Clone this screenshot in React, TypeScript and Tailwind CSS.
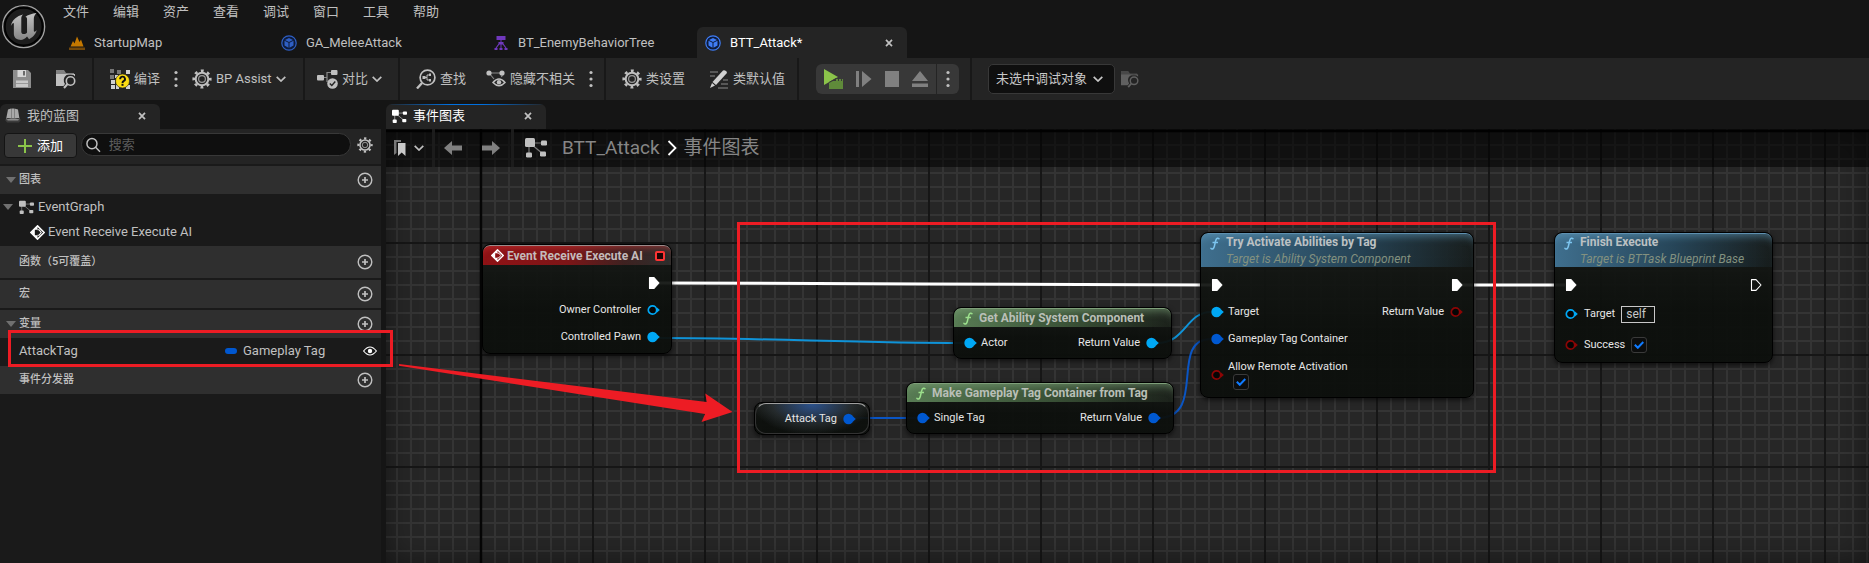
import React from "react";

type P = { className?: string };

/* ---------- icons ---------- */

const Logo = () => (
  <svg viewBox="6 18 130 130" className="size-11 shrink-0" aria-hidden="true">
    <defs>
      <linearGradient id="steel" x1="0" y1="0" x2="0" y2="1">
        <stop offset="0" stopColor="#c4c4c4" />
        <stop offset="1" stopColor="#858585" />
      </linearGradient>
    </defs>
    <circle cx="70" cy="82" r="62" fill="#0b0b0b" stroke="#a3a3a3" strokeWidth="4" />
    <circle cx="70" cy="82" r="55" fill="#1d1d1d" stroke="#000" strokeWidth="4" />
    <path
      d="M32 80C36 62 50 50 68 46C64 50 63 54 63 58V97C63 102 66 104 70 104C74 104 78 102 80 99V60C80 55 78 53 74 54C82 47 95 44 108 42C102 48 100 54 100 60V93C100 99 104 98 109 92C104 107 95 115 86 119L80 111C74 119 66 122 58 121C46 119 41 112 41 102V74C41 69 37 71 32 80Z"
      fill="url(#steel)"
    />
  </svg>
);

const LevelIcon = () => (
  <svg viewBox="0 0 16 16" className="size-4 shrink-0" aria-hidden="true">
    <path d="M1.500 11.500L4 6L5.500 8.500L8 1.500L10.500 7L12 4.500L14.500 11.500Z" fill="#c47800" />
    <path d="M0 12.500H16V15H0Z" fill="#74490a" />
  </svg>
);

const BlueprintIcon = ({ className = "text-[#2f5fc4]" }: P) => (
  <svg viewBox="0 0 16 16" className={"size-4 shrink-0 " + className} aria-hidden="true">
    <circle cx="8" cy="8" r="7.200" fill="#0d1b3b" stroke="currentColor" strokeWidth="1.200" />
    <path d="M8 3L12 4.900L8 6.900L4 4.900Z M3.500 5.800L7.500 7.800V12.800L3.500 10.500Z M12.500 5.800L8.500 7.800V12.800L12.500 10.500Z" fill="currentColor" />
  </svg>
);

const TreeIcon = () => (
  <svg viewBox="0 0 16 16" className="size-4 shrink-0" fill="#7038bd" aria-hidden="true">
    <path d="M3.500 1H12.500V5H3.500ZM5.500 7H10.500V9.500H5.500ZM7.500 5H8.500V13H7.500ZM1.500 13H4.500V15H1.500ZM6.500 13H9.500V15H6.500ZM11.500 13H14.500V15H11.500Z" />
    <path d="M6 9L3 13M10 9L13 13" stroke="#7038bd" strokeWidth="1.200" />
  </svg>
);

const SaveIcon = () => (
  <svg viewBox="0 0 20 20" className="size-5" aria-hidden="true">
    <path d="M1 1H16L19 4V19H1Z" fill="#8d8d8d" />
    <path d="M5.500 1H14V8H5.500Z" fill="#d6d6d6" />
    <path d="M11 2H13V6.500H11Z" fill="#6a6a6a" />
    <path d="M4 11.500H16V18H4Z" fill="#c8c8c8" />
    <path d="M4 14H16V15H4Z" fill="#999" />
  </svg>
);

const BrowseIcon = ({ className = "size-5" }: P) => (
  <svg viewBox="0 0 20 20" className={className} aria-hidden="true">
    <path d="M0 1H8L10 4H18V6H0Z" fill="currentColor" opacity=".6" />
    <path d="M0 5H19V7.500A6 6 0 0 0 9 15L7.500 17H0Z" fill="currentColor" />
    <circle cx="14.500" cy="12" r="4.200" fill="none" stroke="currentColor" strokeWidth="1.600" />
    <path d="M11.500 15L8 19" stroke="currentColor" strokeWidth="2" />
  </svg>
);

const CompileIcon = () => (
  <svg viewBox="0 0 20 20" className="size-5" aria-hidden="true">
    <g fill="#777">
      <path d="M0 0H4V4H0ZM7 1H11V5H7Z" />
      <path d="M0 6H4V10H0Z" />
    </g>
    <g fill="#d0d0d0">
      <path d="M16 1H20V5H16ZM1 11H5V15H1ZM1 16H5V20H1ZM6 16H9V20H6ZM5 6H8V9H5ZM16 16H20V20H16Z" />
    </g>
    <circle cx="12.500" cy="12" r="7" fill="#fcdc12" stroke="#242424" strokeWidth=".6" />
    <path d="M10.200 10.200A2.400 2.400 0 1 1 13.600 12.200Q12.500 12.800 12.500 14" fill="none" stroke="#111" strokeWidth="1.900" />
    <path d="M11.500 14.800H13.500V16.800H11.500Z" fill="#111" />
  </svg>
);

const Gear = ({ className = "size-5" }: P) => (
  <svg viewBox="0 0 20 20" className={className} fill="none" stroke="currentColor" aria-hidden="true">
    <circle cx="10" cy="10" r="8.300" strokeWidth="2.600" strokeDasharray="2.900 3.619" strokeDashoffset="1.450" />
    <circle cx="10" cy="10" r="6.300" strokeWidth="2" />
    <circle cx="10" cy="10" r="3.400" strokeWidth="1.200" opacity=".75" />
  </svg>
);

const DiffIcon = () => (
  <svg viewBox="0 0 21 20" className="h-5 w-[21px]" aria-hidden="true">
    <path d="M6 8.500H10V3.500H15M10 8.500V13" fill="none" stroke="#8a8a8a" strokeWidth="1.200" />
    <rect x="0" y="6" width="7" height="5.500" rx="1" fill="#c0c0c0" />
    <rect x="14" y="1" width="6.500" height="5" rx="1" fill="#c0c0c0" />
    <circle cx="15.500" cy="14.500" r="5.300" fill="#c0c0c0" />
    <path d="M12.800 14.500L14.800 16.500L18.300 12.500" fill="none" stroke="#242424" strokeWidth="1.400" />
  </svg>
);

const FindIcon = () => (
  <svg viewBox="0 0 20 20" className="size-5" fill="none" stroke="#c0c0c0" aria-hidden="true">
    <circle cx="11.500" cy="8.500" r="7.400" strokeWidth="1.700" />
    <path d="M6 14L1 19.500" strokeWidth="2.400" />
    <path d="M8 8.500H11V6H14M11 8.500V11H14" strokeWidth="1" />
    <path d="M6.500 7H9.500V10H6.500ZM13 4.500H15V7H13ZM13 10H15V12.500H13Z" fill="#c0c0c0" stroke="none" />
  </svg>
);

const HideIcon = () => (
  <svg viewBox="0 0 20 20" className="size-5" aria-hidden="true">
    <path d="M3 4L8 10M3 4H17M17 4L15.500 8" fill="none" stroke="#8a8a8a" strokeWidth="1.100" />
    <circle cx="3" cy="4" r="2.600" fill="#c0c0c0" />
    <circle cx="16" cy="4" r="2.600" fill="#c0c0c0" />
    <path d="M7 13.500Q13 6.500 19 13.500Q13 20 7 13.500Z" fill="#242424" stroke="#c0c0c0" strokeWidth="1.500" />
    <circle cx="13" cy="13.300" r="2.200" fill="#c0c0c0" />
  </svg>
);

const PencilIcon = () => (
  <svg viewBox="0 0 20 20" className="size-5" aria-hidden="true">
    <path d="M1 3H9M1 7H6M14 11H19M12 15H19M9 19H19" stroke="#8a8a8a" strokeWidth="1.200" />
    <path d="M14 1.500Q16 .5 18 3L17.500 4.500L7 16L3.500 13Z" fill="#d0d0d0" />
    <path d="M3 14L6 16.500L1 19Z" fill="#d0d0d0" />
  </svg>
);

const Chevron = ({ className = "w-[10px] h-[6px]" }: P) => (
  <svg viewBox="0 0 10 6" className={className} fill="none" stroke="currentColor" strokeWidth="1.700" aria-hidden="true">
    <path d="M.7 .8L5 5L9.300 .8" />
  </svg>
);

const Dots = () => (
  <svg viewBox="0 0 4 18" className="h-[18px] w-1" fill="currentColor" aria-hidden="true">
    <circle cx="2" cy="2.500" r="1.600" />
    <circle cx="2" cy="9" r="1.600" />
    <circle cx="2" cy="15.500" r="1.600" />
  </svg>
);

const CloseIcon = () => (
  <svg viewBox="0 0 8 8" className="size-2" stroke="currentColor" strokeWidth="1.700" aria-hidden="true">
    <path d="M1 .8L7 7.200M7 .8L1 7.200" />
  </svg>
);

const GraphIcon = ({ className = "size-[15px]" }: P) => (
  <svg viewBox="0 0 22 20" className={"shrink-0 " + className} aria-hidden="true">
    <path d="M4 5H18M4 5V17M6 6L18 16" stroke="currentColor" opacity=".6" strokeWidth="1.200" />
    <rect x="0" y="0" width="10" height="9" rx="1.500" fill="currentColor" />
    <rect x="16" y="2.500" width="6" height="5" rx="1.200" fill="currentColor" />
    <rect x="1" y="14.500" width="6" height="5" rx="1.200" fill="currentColor" />
    <rect x="15" y="13.500" width="6" height="5" rx="1.200" fill="currentColor" />
  </svg>
);

const BookIcon = () => (
  <svg viewBox="0 0 16 16" className="size-4 shrink-0" aria-hidden="true">
    <path d="M3 1.500L6 .5V11L1 11.500ZM6.300 .5H9V11H6.300ZM9.300 .5L13 1.500L14.500 11L9.300 11Z" fill="#a8a8a8" />
    <path d="M0 12L2 10L14 10L16 12L14 14.500L2 14.500Z" fill="#3c3c3c" />
    <path d="M1 11.500L6 10.500H10L14.500 11.500L13 12.500H3Z" fill="#8c8c8c" />
  </svg>
);

const EventIcon = ({ className = "size-[15px]" }: P) => (
  <svg viewBox="0 0 14 14" className={"shrink-0 " + className} aria-hidden="true">
    <path d="M7 .8L13.200 7L7 13.200L.8 7Z" fill="none" stroke="#fff" strokeWidth="1.400" />
    <path d="M7 1V4.500H4.500V9.500H7V13L1 7Z" fill="#fff" />
    <path d="M7 4.500H8.500L10.500 7L8.500 9.500H7" fill="none" stroke="#fff" strokeWidth="1" />
  </svg>
);

const PlusCircle = () => (
  <svg viewBox="0 0 16 16" className="size-4" fill="none" stroke="#c0c0c0" aria-hidden="true">
    <circle cx="8" cy="8" r="6.800" strokeWidth="1.400" />
    <path d="M8 5V11M5 8H11" strokeWidth="1.700" />
  </svg>
);

const Triangle = () => (
  <svg viewBox="0 0 10 6" className="h-[6px] w-[10px] shrink-0" aria-hidden="true">
    <path d="M0 0H10L5 6Z" fill="#707070" />
  </svg>
);

const ArrowIcon = ({ className = "" }: P) => (
  <svg viewBox="0 0 18 14" className={"h-[14px] w-[18px] " + className} aria-hidden="true">
    <path d="M0 7L8 0V4.500H18V9.500H8V14Z" fill="#808080" />
  </svg>
);

const FuncIcon = ({ className = "" }: P) => (
  <svg viewBox="0 0 10 13" className={"h-[13px] w-[10px] shrink-0 " + className} fill="none" stroke="currentColor" aria-hidden="true">
    <path d="M9.300 2.200Q8.800 .8 7.300 1.300Q6.200 1.700 5.600 4L4.300 9.500Q3.600 12.300 1.800 12Q.8 11.800 .8 10.800" strokeWidth="1.500" />
    <path d="M2.500 5.500H8" strokeWidth="1.300" />
  </svg>
);

const ExecPin = ({ open = false }: { open?: boolean }) => (
  <svg viewBox="0 0 12 12" className="size-3 shrink-0" aria-hidden="true">
    <path d="M1.500 .6H6L11 6L6 11.400H1.500Z" fill={open ? "none" : "#fff"} stroke="#fff" strokeWidth="1.100" strokeLinejoin="round" />
  </svg>
);

const Pin = ({ className = "text-[#00a8f5]", open = false }: P & { open?: boolean }) => (
  <svg viewBox="0 0 13 12" className={"h-3 w-[13px] shrink-0 " + className} aria-hidden="true">
    <circle cx="5.500" cy="6" r={open ? 4.200 : 5.200} fill={open ? "#050505" : "currentColor"} stroke="currentColor" strokeWidth={open ? 1.700 : 0} />
    <path d="M10 3.500L12.800 6L10 8.500Z" fill="currentColor" />
  </svg>
);

/* ---------- chrome ---------- */

const MENU = ["文件", "编辑", "资产", "查看", "调试", "窗口", "工具", "帮助"];

function TopBar() {
  return (
    <header className="flex h-[58px] bg-[#151515] pl-[2px]">
      <div className="flex w-[59px] items-start pt-[5px]">
        <Logo />
      </div>
      <div className="flex flex-1 flex-col justify-between">
        <nav className="flex h-6 items-center gap-6 pl-[2px]">
          {MENU.map((m) => (
            <button key={m} className="leading-6 whitespace-nowrap">{m}</button>
          ))}
        </nav>
        <div role="tablist" className="flex h-[31px] gap-[2px]">
          <DocTab icon={<LevelIcon />} label="StartupMap" />
          <DocTab icon={<BlueprintIcon />} label="GA_MeleeAttack" />
          <DocTab icon={<TreeIcon />} label="BT_EnemyBehaviorTree" />
          <DocTab icon={<BlueprintIcon className="text-[#3f7df6]" />} label="BTT_Attack*" active />
        </div>
      </div>
    </header>
  );
}

function DocTab({ icon, label, active }: { icon: React.ReactNode; label: string; active?: boolean }) {
  return (
    <div className={"flex w-[210px] items-center rounded-t-md pr-[14px] pl-2 " + (active ? "bg-[#242424] text-white" : "")}>
      <button role="tab" aria-selected={!!active} className="flex flex-1 items-center gap-[9px]">
        {icon}
        {label}
      </button>
      {active && (
        <button aria-label="关闭" className="text-[#c0c0c0]"><CloseIcon /></button>
      )}
    </div>
  );
}

const Sep = () => <div className="w-[2px] shrink-0 self-stretch bg-[#181818]" />;

const Tool = ({ icon, label, drop }: { icon: React.ReactNode; label: string; drop?: boolean }) => (
  <button className="flex items-center gap-1 whitespace-nowrap">
    {icon}
    {label}
    {drop && <Chevron />}
  </button>
);

function Toolbar() {
  return (
    <div className="flex h-[42px] items-center bg-[#242424]">
      <div className="flex w-[92px] items-center gap-6 pl-3">
        <button aria-label="保存"><SaveIcon /></button>
        <button aria-label="浏览"><BrowseIcon /></button>
      </div>
      <Sep />
      <div className="flex w-[209px] items-center gap-[14px] pl-4">
        <Tool icon={<CompileIcon />} label="编译" />
        <button aria-label="编译选项"><Dots /></button>
        <Tool icon={<Gear />} label="BP Assist" drop />
      </div>
      <Sep />
      <div className="flex w-[93px] items-center pl-3">
        <Tool icon={<DiffIcon />} label="对比" drop />
      </div>
      <Sep />
      <div className="flex w-[204px] items-center gap-5 pl-4">
        <Tool icon={<FindIcon />} label="查找" />
        <div className="flex items-center gap-[14px]">
          <Tool icon={<HideIcon />} label="隐藏不相关" />
          <button aria-label="隐藏选项"><Dots /></button>
        </div>
      </div>
      <Sep />
      <div className="flex w-[191px] items-center gap-6 pl-4">
        <Tool icon={<Gear />} label="类设置" />
        <Tool icon={<PencilIcon />} label="类默认值" />
      </div>
      <Sep />
      <div className="flex w-[171px] items-center pl-[17px]">
        <div className="flex h-[30px] items-center rounded-md bg-[#383838] text-[#808080]">
          <div className="flex items-center gap-3 px-2">
            <button aria-label="播放">
              <svg viewBox="0 0 20 20" className="size-5" aria-hidden="true">
                <path d="M0 0L14 8L0 16Z" fill="#8bc34a" />
                <path d="M5 13L12 9H19V20H5Z" fill="#383838" />
                <path d="M5 14L9 12H19V20H5Z" fill="#5f8a3a" />
                <path d="M12 11H19" stroke="#5f8a3a" strokeDasharray="2 1" strokeWidth="2" />
              </svg>
            </button>
            <button aria-label="单步">
              <svg viewBox="0 0 16 16" className="size-4" fill="currentColor" aria-hidden="true">
                <path d="M0 0H3V16H0ZM6 0L15.500 8L6 16Z" />
              </svg>
            </button>
            <button aria-label="停止">
              <svg viewBox="0 0 16 16" className="size-4" fill="currentColor" aria-hidden="true">
                <path d="M1 0H15V16H1Z" />
              </svg>
            </button>
            <button aria-label="弹出">
              <svg viewBox="0 0 16 16" className="size-4" fill="currentColor" aria-hidden="true">
                <path d="M8 0L16 10H0ZM0 12.500H16V16H0Z" />
              </svg>
            </button>
          </div>
          <div className="h-full w-px bg-[#242424]" />
          <button aria-label="播放选项" className="px-[9px] text-[#c0c0c0]"><Dots /></button>
        </div>
      </div>
      <Sep />
      <div className="flex items-center gap-[6px] pl-4">
        <div className="relative text-[#c8c8c8]">
          <select aria-label="调试对象" className="h-[30px] w-[127px] appearance-none rounded-[5px] border border-[#383838] bg-[#0f0f0f] pl-[7px]">
            <option>未选中调试对象</option>
          </select>
          <Chevron className="pointer-events-none absolute top-3 right-3 h-[6px] w-[10px]" />
        </div>
        <button aria-label="浏览调试对象" className="text-[#606060]"><BrowseIcon className="size-[18px]" /></button>
      </div>
    </div>
  );
}

/* ---------- left panel ---------- */

function Section({ label, open, className = "h-7" }: { label: string; open?: boolean } & P) {
  return (
    <div className={"flex items-center bg-[#2f2f2f] pr-2 pl-[6px] " + className}>
      <div className="flex w-[13px]">{open && <Triangle />}</div>
      <span className="flex-1 text-[11px] leading-4 font-medium">{label}</span>
      <button aria-label={"添加" + label}><PlusCircle /></button>
    </div>
  );
}

function MyBlueprint() {
  return (
    <aside className="flex w-[381px] shrink-0 flex-col">
      <div className="flex h-[29px] items-end">
        <div className="flex h-[25px] w-40 items-center rounded-t-md bg-[#242424] pr-[14px] pb-[2px] pl-[5px]">
          <div className="flex flex-1 items-center gap-[6px]">
            <BookIcon />
            我的蓝图
          </div>
          <button aria-label="关闭"><CloseIcon /></button>
        </div>
      </div>
      <div className="flex flex-1 flex-col bg-[#1a1a1a]">
        <div className="mb-[2px] flex h-[35px] items-start gap-1 bg-[#242424] pt-1 pr-2 pl-1">
          <button className="flex h-[25px] w-[73px] items-center justify-center gap-[5px] rounded border border-[#141414] bg-[#383838] text-white">
            <svg viewBox="0 0 14 14" className="size-[14px]" stroke="#8bc34a" strokeWidth="2" aria-hidden="true">
              <path d="M7 0V14M0 7H14" />
            </svg>
            添加
          </button>
          <label className="flex h-[23px] flex-1 items-center gap-2 rounded-full border border-[#383838] bg-[#0f0f0f] pl-1">
            <svg viewBox="0 0 16 16" className="size-4" fill="none" stroke="#c0c0c0" strokeWidth="1.600" aria-hidden="true">
              <circle cx="6.500" cy="6.500" r="5.500" />
              <path d="M10.500 10.500L15.300 15.300" />
            </svg>
            <input aria-label="搜索" placeholder="搜索" className="w-full bg-transparent outline-none placeholder:text-[#5c5c5c]" />
          </label>
          <button aria-label="设置" className="flex h-6 items-center pl-[2px]"><Gear className="size-4" /></button>
        </div>
        <Section label="图表" open />
        <div className="flex h-[26px] items-center pl-[3px]">
          <div className="flex w-4"><Triangle /></div>
          <GraphIcon className="mr-1 size-[15px]" />
          EventGraph
        </div>
        <div className="flex h-[26px] items-center gap-[3px] pb-[2px] pl-[30px]">
          <EventIcon />
          Event Receive Execute AI
        </div>
        <Section label="函数（5可覆盖）" className="mb-[2px] h-8" />
        <Section label="宏" className="mb-[2px] h-7" />
        <Section label="变量" open />
        <div className="flex h-7 items-center pr-1 pb-[2px] pl-[19px]">
          <span className="w-[206px]">AttackTag</span>
          <span className="mr-[6px] h-[6px] w-3 rounded-full bg-[#0057d0]" />
          <span className="flex-1">Gameplay Tag</span>
          <button aria-label="切换可见性">
            <svg viewBox="0 0 14 10" className="h-[10px] w-[14px]" fill="none" stroke="#fff" strokeWidth="1.200" aria-hidden="true">
              <path d="M.6 5Q7-3 13.400 5Q7 13 .6 5Z" />
              <circle cx="7" cy="5" r="2.200" fill="#fff" stroke="none" />
            </svg>
          </button>
        </div>
        <Section label="事件分发器" />
      </div>
    </aside>
  );
}

/* ---------- graph ---------- */

const Row = ({ left, right, className = "h-[27px]" }: { left?: React.ReactNode; right?: React.ReactNode } & P) => (
  <div className={"flex items-center justify-between " + className}>
    <div className="flex items-center gap-1">{left}</div>
    <div className="flex items-center gap-[6px]">{right}</div>
  </div>
);

const NODE =
  "absolute overflow-hidden rounded-lg border border-black bg-[linear-gradient(180deg,rgba(22,25,22,.93),rgba(12,15,12,.95)_60%)] text-[11px] leading-[14px] text-[#e6e6e6] shadow-[0_2px_5px_rgba(0,0,0,.6)] ";

function CallNode({ title, sub, className, children }: { title: string; sub: string; className: string; children: React.ReactNode }) {
  return (
    <section className={NODE + className}>
      <div className="flex h-[34px] gap-[6px] rounded-t-[7px] border-t border-[#5e90b0] bg-[linear-gradient(90deg,#3f6f8e_0%,rgba(44,84,110,.75)_55%,rgba(40,60,72,.15)_100%)] pl-[9px] shadow-[inset_0_8px_8px_-6px_rgba(100,160,195,.6)]">
        <FuncIcon className="mt-[3px] text-[#7cc4ee]" />
        <div className="flex flex-col whitespace-nowrap">
          <h2 className="text-[12px] leading-[17px] font-bold text-[#bcc1c3]">{title}</h2>
          <p className="text-[12px] leading-4 text-[#83917f] italic">{sub}</p>
        </div>
      </div>
      <div className="px-[10px] pt-1">{children}</div>
    </section>
  );
}

function PureNode({ title, className, children }: { title: string; className: string; children: React.ReactNode }) {
  return (
    <section className={NODE + className}>
      <div className="flex h-[19px] items-center gap-[6px] rounded-t-[7px] border-t border-[#7f9f7a] bg-[linear-gradient(90deg,#587c54_0%,rgba(66,94,62,.8)_55%,rgba(50,62,48,.3)_100%)] pl-[9px] whitespace-nowrap shadow-[inset_0_8px_8px_-6px_rgba(130,170,125,.6)]">
        <FuncIcon className="text-[#9be08c]" />
        <h2 className="text-[12px] leading-4 font-bold text-[#b9bfb7]">{title}</h2>
      </div>
      <div className="pt-[2px] pr-3 pl-[10px]">{children}</div>
    </section>
  );
}

const Check = ({ id, label }: { id: string; label?: string }) => (
  <span className="relative flex size-4">
    <input id={id} aria-label={label} type="checkbox" defaultChecked className="size-4 appearance-none rounded-[3px] border border-[#3a3a3a] bg-[#0c0d0d]" />
    <svg viewBox="0 0 10 8" className="pointer-events-none absolute top-1 left-[3px] h-2 w-[10px]" fill="none" stroke="#0f7bff" strokeWidth="2" aria-hidden="true">
      <path d="M.8 3.800L3.800 6.800L9.300 1" />
    </svg>
  </span>
);

const BLUE = "text-[#0058d0]";
const RED = "text-[#8c0505]";

function Graph() {
  return (
    <main className="relative flex-1 overflow-hidden bg-[#262626] [background-image:linear-gradient(#000_2px,transparent_2px),linear-gradient(90deg,#000_2px,transparent_2px),linear-gradient(#161616_2px,transparent_2px),linear-gradient(90deg,#161616_2px,transparent_2px),linear-gradient(#343434_2px,transparent_2px),linear-gradient(90deg,#343434_2px,transparent_2px)] [background-position:0_1px,94px_0,0_1px,94px_0,0_1px,94px_0] [background-size:4000px_4000px,4000px_4000px,112px_112px,112px_112px,14px_14px,14px_14px]">
      <div className="absolute inset-0 shadow-[inset_0_0_30px_rgba(0,0,0,.45)]" />

      <svg className="absolute inset-0 size-full" fill="none" aria-hidden="true">
        <path d="M273 154C450 154 650 156 825 156" stroke="#fff" strokeWidth="3" />
        <path d="M1075 156H1179" stroke="#fff" strokeWidth="3" />
        <path d="M273 209C380 209 470 214 578 214" stroke="#0f93d8" strokeWidth="2" />
        <path d="M771 214C800 214 800 183 825 183" stroke="#0f93d8" strokeWidth="2" />
        <path d="M772 289C822 289 782 210 825 210" stroke="#0a55c4" strokeWidth="2" />
        <path d="M469 289H531" stroke="#0a55c4" strokeWidth="2" />
      </svg>

      <div className="relative flex h-[38px] items-center bg-black/55">
        <button aria-label="书签" className="flex w-[46px] items-center gap-2 pl-2 text-[#c0c0c0]">
          <svg viewBox="0 0 12 16" className="h-4 w-3" aria-hidden="true">
            <path d="M0 0H7V2H2.500V13L0 15Z" fill="#777" />
            <path d="M4 3H11.500V16L7.700 12.500L4 16Z" fill="#c8c8c8" />
          </svg>
          <Chevron />
        </button>
        <div className="h-full w-[3px] bg-[#1c1c1c]" />
        <div className="flex w-[76px] gap-5 pl-[9px]">
          <button aria-label="后退"><ArrowIcon /></button>
          <button aria-label="前进"><ArrowIcon className="rotate-180" /></button>
        </div>
        <div className="h-full w-[3px] bg-[#1c1c1c]" />
        <div className="flex items-center gap-[7px] pl-[11px] text-[19px] leading-6 text-[#868686]">
          <GraphIcon className="mr-2 h-5 w-[22px] text-[#c0c0c0]" />
          <a href="#BTT_Attack">BTT_Attack</a>
          <svg viewBox="0 0 10 16" className="h-4 w-[10px]" fill="none" stroke="#fff" strokeWidth="1.800" aria-hidden="true">
            <path d="M1.500 1L8.500 8L1.500 15" />
          </svg>
          <a href="#EventGraph">事件图表</a>
        </div>
      </div>

      <section className={NODE + "top-[115px] left-24 h-[110px] w-[190px]"}>
        <div className="flex h-5 items-center gap-[3px] rounded-t-[7px] border-t border-[#9b8a8a] bg-[linear-gradient(90deg,#8f1215_0%,#7d1517_45%,rgba(90,40,40,.6)_75%,rgba(60,60,60,.6)_100%)] pr-[6px] pl-2 whitespace-nowrap shadow-[inset_0_6px_6px_-4px_rgba(220,60,60,.5)]">
          <EventIcon className="size-[13px]" />
          <h2 className="flex-1 text-[12px] leading-4 font-bold text-[#c4baba]">Event Receive Execute AI</h2>
          <span className="size-[10px] rounded-[2px] border-2 border-[#ff3333] bg-[#200505]" />
        </div>
        <div className="pt-1 pr-[11px]">
          <Row right={<ExecPin />} />
          <Row right={<>Owner Controller<Pin open /></>} />
          <Row right={<>Controlled Pawn<Pin /></>} />
        </div>
      </section>

      <PureNode title="Get Ability System Component" className="top-[178px] left-[567px] h-[52px] w-[219px]">
        <Row left={<><Pin />Actor</>} right={<>Return Value<Pin /></>} />
      </PureNode>

      <PureNode title="Make Gameplay Tag Container from Tag" className="top-[253px] left-[520px] h-[52px] w-[268px]">
        <Row left={<><Pin className={BLUE} />Single Tag</>} right={<>Return Value<Pin className={BLUE} /></>} />
      </PureNode>

      <section className={NODE + "top-[273px] left-[368px] h-[33px] w-[116px] rounded-[12px]"}>
        <div className="flex h-full items-center justify-end gap-[6px] rounded-[11px] border border-t-[#a0a0a0] border-r-[#333] border-b-[#333] border-l-[#333] bg-[radial-gradient(ellipse_at_50%_0%,rgba(50,100,180,.75),rgba(70,80,90,.35)_50%,transparent_75%)] pr-3">
          Attack Tag
          <Pin className={BLUE} />
        </div>
      </section>

      <CallNode title="Try Activate Abilities by Tag" sub="Target is Ability System Component" className="top-[103px] left-[814px] h-[166px] w-[274px]">
        <Row left={<ExecPin />} right={<ExecPin />} />
        <Row left={<><Pin />Target</>} right={<>Return Value<Pin className={RED} open /></>} />
        <Row left={<><Pin className={BLUE} />Gameplay Tag Container</>} />
        <div className="flex items-center gap-1 pt-2">
          <Pin className={RED} open />
          <div className="flex flex-col">
            <label htmlFor="remote">Allow Remote Activation</label>
            <div className="pl-[5px]"><Check id="remote" /></div>
          </div>
        </div>
      </CallNode>

      <CallNode title="Finish Execute" sub="Target is BTTask Blueprint Base" className="top-[103px] left-[1168px] h-[131px] w-[219px]">
        <Row left={<ExecPin />} right={<ExecPin open />} />
        <Row
          className="h-8"
          left={
            <>
              <Pin open />
              <label htmlFor="self" className="px-[2px]">Target</label>
              <input id="self" defaultValue="self" className="h-[17px] w-[34px] border border-[#c8c8c8] bg-transparent pl-1 text-[12px] text-[#c8c8c8]" />
            </>
          }
        />
        <Row
          className="h-[30px]"
          left={
            <>
              <Pin className={RED} open />
              <label htmlFor="success" className="px-[2px]">Success</label>
              <Check id="success" />
            </>
          }
        />
      </CallNode>
    </main>
  );
}

/* ---------- callouts drawn over the editor ---------- */

const Callouts = () => (
  <>
    <div className="pointer-events-none absolute top-[330px] left-2 h-[37px] w-[385px] border-3 border-[#ed1c24]" />
    <div className="pointer-events-none absolute top-[222px] left-[737px] h-[251px] w-[759px] border-3 border-[#ed1c24]" />
    <svg viewBox="0 0 336 60" className="pointer-events-none absolute top-[363px] left-[398px] h-[60px] w-[336px]" aria-hidden="true">
      <path d="M1 1L308.700 39L307.300 30.500L334.500 49L303.500 59L307 51L1 2.700Z" fill="#ed1c24" />
    </svg>
  </>
);

export default function App() {
  return (
    <div className="relative flex h-screen flex-col overflow-hidden bg-[#151515] font-['Roboto','Noto_Sans_CJK_SC',sans-serif] text-[13px] leading-5 text-[#c0c0c0]">
      <TopBar />
      <Toolbar />
      <div className="flex min-h-0 flex-1 gap-[5px]">
        <MyBlueprint />
        <div className="flex min-w-0 flex-1 flex-col">
          <div className="flex h-[29px] items-end">
            <div className="h-[25px] w-40 overflow-hidden rounded-t-md bg-[#242424]">
              <div className="h-px bg-[linear-gradient(90deg,transparent,#0070e0_40%,#0070e0_60%,transparent)]" />
              <div className="flex h-6 items-center pr-[14px] pb-[2px] pl-[6px]">
                <div className="flex flex-1 items-center gap-[6px] text-white">
                  <GraphIcon />
                  事件图表
                </div>
                <button aria-label="关闭"><CloseIcon /></button>
              </div>
            </div>
          </div>
          <Graph />
        </div>
      </div>
      <Callouts />
    </div>
  );
}
